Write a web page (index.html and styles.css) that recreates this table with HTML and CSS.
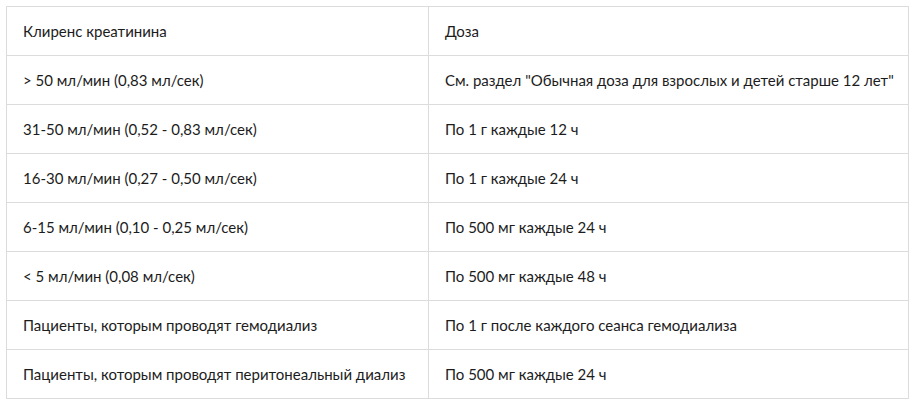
FILE: index.html
```html
<!DOCTYPE html>
<html lang="ru">
<head>
<meta charset="utf-8">
<link rel="stylesheet" href="styles.css">
</head>
<body>
<div class="wrap">
<table class="dose-table">
<tbody>
<tr><td class="col-a">Клиренс креатинина</td><td>Доза</td></tr>
<tr><td class="col-a">&gt; 50 мл/мин (0,83 мл/сек)</td><td>См. раздел "Обычная доза для взрослых и детей старше 12 лет"</td></tr>
<tr><td class="col-a">31-50 мл/мин (0,52 - 0,83 мл/сек)</td><td>По 1 г каждые 12 ч</td></tr>
<tr><td class="col-a">16-30 мл/мин (0,27 - 0,50 мл/сек)</td><td>По 1 г каждые 24 ч</td></tr>
<tr><td class="col-a">6-15 мл/мин (0,10 - 0,25 мл/сек)</td><td>По 500 мг каждые 24 ч</td></tr>
<tr><td class="col-a">&lt; 5 мл/мин (0,08 мл/сек)</td><td>По 500 мг каждые 48 ч</td></tr>
<tr><td class="col-a">Пациенты, которым проводят гемодиализ</td><td>По 1 г после каждого сеанса гемодиализа</td></tr>
<tr><td class="col-a">Пациенты, которым проводят перитонеальный диализ</td><td>По 500 мг каждые 24 ч</td></tr>
</tbody>
</table>
</div>
</body>
</html>
```
FILE: styles.css
```css
html, body {
  margin: 0;
  padding: 0;
  background: #fff;
}
.wrap {
  padding: 6px 7px 0 6px;
}
.dose-table {
  border-collapse: collapse;
  width: 903px;
  table-layout: fixed;
  font-family: Lato, "Open Sans", "Noto Sans", sans-serif;
  font-size: 15px;
  color: #1c1c1c;
}
.dose-table td {
  border: 1px solid #dcdcdc;
  height: 49px;
  padding: 0 16px;
  box-sizing: border-box;
  vertical-align: middle;
  white-space: nowrap;
}
.dose-table td.col-a {
  width: 422px;
}
```
